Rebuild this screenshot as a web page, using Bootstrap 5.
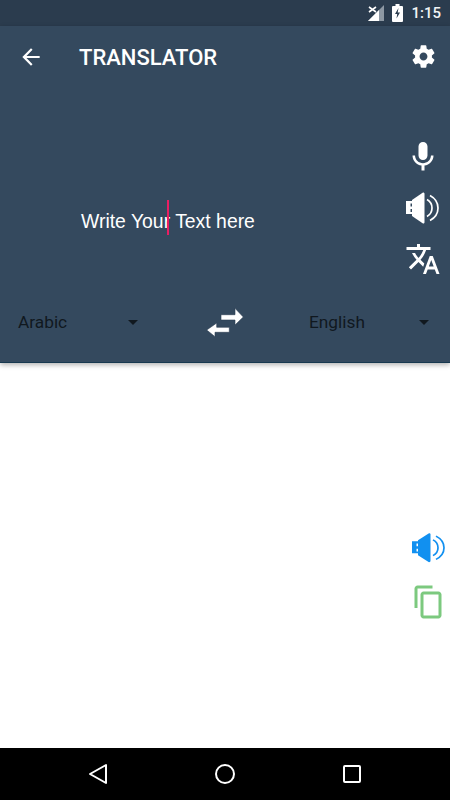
<!doctype html>
<html lang="en">
<head>
    <meta charset="utf-8">
    <meta name="viewport" content="width=device-width, initial-scale=1">
    <title>Translator</title>
    <link href="https://cdn.jsdelivr.net/npm/bootstrap@5.3.3/dist/css/bootstrap.min.css" rel="stylesheet">
    <style>
        html, body { height: 100%; margin: 0; overflow: hidden; }
        body { font-family: Roboto, "Liberation Sans", sans-serif; }
        svg { display: block; flex: none; }

        .app-frame { width: 450px; height: 800px; }

        .status-strip { height: 26px; background: #2b3c4e; color: #f2f4f6; font-size: 15px; font-weight: 500; padding-right: 9px; gap: 8px; }

        .top-panel { height: 337px; background: #34495e; border-bottom: 1px solid #17384f; box-shadow: 0 2px 5px rgba(0, 0, 0, .3); position: relative; }
        .tool-row { height: 62px; padding: 0 13px 0 17.5px; }
        .back-icon { margin-top: -1px; }
        .gear-icon { margin-top: -1px; }
        .app-title { margin: 1px 0 0 35.5px; font-size: 22px; font-weight: 500; color: #fff; line-height: 1; }

        .input-area { height: 207px; padding-right: 9px; }
        .input-text { padding: 118px 0 0 81px; font-family: "Liberation Sans", Arial, sans-serif; font-size: 19.4px; line-height: 30px; color: #fff; white-space: pre; }
        .text-cursor { display: inline-block; width: 2px; height: 35px; margin: -6px 1px 0 -3px; background: #e91e63; vertical-align: top; }
        .side-tools { width: 36px; padding-top: 51px; gap: 15px; }

        .lang-row { height: 67px; padding-bottom: 12px; }
        .lang-pick { font-size: 17.3px; color: #10181f; }
        .lang-left { margin-left: 18px; }
        .lang-right { margin-left: 63px; }
        .swap-icon { margin: -1px 0 0 68.5px; }
        .drop-tri { width: 0; height: 0; border-left: 5px solid transparent; border-right: 5px solid transparent; border-top: 5px solid #10181f; margin-top: -1px; }
        .lang-name-l { width: 109.5px; }
        .lang-name-r { width: 110px; }

        .result-area { height: 385px; padding: 167.5px 3px 0 0; gap: 19.5px; }
        .copy-icon { margin-right: 1.5px; }

        .nav-strip { height: 52px; background: #000; padding: 0 88px; }
    </style>
</head>
<body>
    <div class="app-frame d-flex flex-column bg-white">

        <div class="status-strip d-flex align-items-center justify-content-end">
            <svg width="20" height="20" viewBox="0 0 20 20">
                <path d="M20 2v16H4z" fill="#8d98a3"/>
                <path d="M15 7v11H4z" fill="#fff"/>
                <path d="M5 4l7 5M12 4L5 9" stroke="#fff" stroke-width="1.600"/>
            </svg>
            <svg width="11" height="18" viewBox="0 0 11 18">
                <path d="M3.500 0h4v2H10a1 1 0 0 1 1 1v14a1 1 0 0 1-1 1H1a1 1 0 0 1-1-1V3a1 1 0 0 1 1-1h2.500z" fill="#fff"/>
                <path d="M6.500 4L3 10h2.200l-.7 4.500L8 8.500H5.700z" fill="#2b3c4e"/>
            </svg>
            <span>1:15</span>
        </div>

        <div class="top-panel">
            <div class="tool-row d-flex align-items-center">
                <svg class="back-icon" width="26" height="26" viewBox="0 0 24 24" fill="#fff"><path d="M20 11H7.830l5.590-5.590L12 4l-8 8 8 8 1.410-1.410L7.830 13H20v-2z"/></svg>
                <h1 class="app-title flex-grow-1">TRANSLATOR</h1>
                <svg class="gear-icon" width="27" height="27" viewBox="0 0 24 24" fill="#fff"><path d="M19.430 12.980c.04-.32.07-.64.07-.98s-.03-.66-.07-.98l2.110-1.650c.19-.15.24-.42.12-.64l-2-3.460c-.12-.22-.39-.3-.61-.22l-2.490 1c-.52-.4-1.080-.73-1.690-.98l-.38-2.650C14.460 2.180 14.250 2 14 2h-4c-.25 0-.46.18-.49.42l-.38 2.650c-.61.25-1.170.59-1.690.98l-2.490-1c-.23-.09-.49 0-.61.22l-2 3.460c-.13.22-.07.49.12.64l2.110 1.650c-.04.32-.07.65-.07.98s.03.66.07.98l-2.110 1.650c-.19.15-.24.42-.12.64l2 3.460c.12.22.39.3.61.22l2.490-1c.52.4 1.080.73 1.690.98l.38 2.650c.03.24.24.42.49.42h4c.25 0 .46-.18.49-.42l.38-2.650c.61-.25 1.170-.59 1.690-.98l2.490 1c.23.09.49 0 .61-.22l2-3.460c.12-.22.07-.49-.12-.64l-2.110-1.650zM12 15.500c-1.930 0-3.500-1.570-3.500-3.500s1.570-3.500 3.500-3.500 3.500 1.570 3.500 3.500-1.570 3.500-3.500 3.500z"/></svg>
            </div>

            <div class="input-area d-flex justify-content-between">
                <div class="input-text">Write Your<span class="text-cursor"></span> Text here</div>
                <div class="side-tools d-flex flex-column align-items-center">
                    <svg width="36" height="36" viewBox="0 0 24 24" fill="#fff"><path d="M12 14c1.660 0 2.990-1.340 2.990-3L15 5c0-1.660-1.340-3-3-3S9 3.340 9 5v6c0 1.660 1.340 3 3 3zm5.300-3c0 3-2.540 5.100-5.300 5.100S6.700 14 6.700 11H5c0 3.410 2.720 6.230 6 6.720V21h2v-3.280c3.280-.48 6-3.300 6-6.720h-1.700z"/></svg>
                    <svg width="36" height="36" viewBox="0 0 36 36" fill="#fff">
                        <path d="M1 11h6v2.500H5.500v3H7v2.500H5.500V22H7v2H1z"/>
                        <path d="M7 10l11-7.500c1 0 1.500.5 1.500 1.500v28c0 1-.5 1.500-1.500 1.500L7 26z"/>
                        <path d="M22 9.500c3.500 2 5 5 5 8.500s-1.500 6.500-5 8.500M25 5.500c5.500 3 8 7.500 8 12.500s-2.500 9.500-8 12.500" fill="none" stroke="#fff" stroke-width="1.700"/>
                    </svg>
                    <svg width="36" height="36" viewBox="0 0 24 24" fill="#fff"><path d="M12.870 15.070l-2.540-2.510.03-.03c1.740-1.940 2.980-4.170 3.710-6.530H17V4h-7V2H8v2H1v1.990h11.170C11.500 7.920 10.440 9.750 9 11.350 8.070 10.320 7.300 9.190 6.690 8h-2c.73 1.630 1.730 3.170 2.980 4.560l-5.090 5.020L4 19l5-5 3.110 3.110.76-2.040zM18.500 10h-2L12 22h2l1.120-3h4.750L21 22h2l-4.500-12zm-2.620 7l1.620-4.330L19.120 17h-3.240z"/></svg>
                </div>
            </div>

            <div class="lang-row d-flex align-items-center">
                <div class="lang-pick lang-left d-flex align-items-center">
                    <span class="lang-name-l">Arabic</span><span class="drop-tri"></span>
                </div>
                <svg class="swap-icon" width="40" height="30" viewBox="0 0 40 30" fill="#fff">
                    <path d="M15 7.700h14V1.300L37.300 10 29 18v-5H15z" stroke="#2a3d50" stroke-width=".6"/>
                    <path d="M23.300 25.300H9v4.400L.7 23 10.700 16v4.300h12.600z" stroke="#2a3d50" stroke-width=".6"/>
                </svg>
                <div class="lang-pick lang-right d-flex align-items-center">
                    <span class="lang-name-r">English</span><span class="drop-tri"></span>
                </div>
            </div>
        </div>

        <div class="result-area d-flex flex-column align-items-end">
            <svg width="36" height="33.500" viewBox="0 0 36 36" preserveAspectRatio="none" fill="#1190f0">
                <path d="M1 11h6v2.500H5.500v3H7v2.500H5.500V22H7v2H1z"/>
                <path d="M7 10l11-7.500c1 0 1.500.5 1.500 1.500v28c0 1-.5 1.500-1.500 1.500L7 26z"/>
                <path d="M22 9.500c3.500 2 5 5 5 8.500s-1.500 6.500-5 8.500M25 5.500c5.500 3 8 7.500 8 12.500s-2.500 9.500-8 12.500" fill="none" stroke="#1190f0" stroke-width="1.700"/>
            </svg>
            <svg class="copy-icon" width="36" height="36" viewBox="0 0 24 24" fill="#7cc97f"><path d="M15 1H5C4 1 3 2 3 3v13h2V3h10V1zm4 4H9C8 5 7 6 7 7v14c0 1 1 2 2 2h10c1 0 2-1 2-2V7c0-1-1-2-2-2zm0 16H9V7h10v14z"/></svg>
        </div>

        <div class="nav-strip d-flex align-items-center justify-content-between">
            <svg width="20" height="22" viewBox="0 0 20 22"><path d="M18 2v18L2 11z" fill="none" stroke="#fff" stroke-width="2" stroke-linejoin="round"/></svg>
            <svg width="22" height="22" viewBox="0 0 22 22"><circle cx="11" cy="11" r="9" fill="none" stroke="#fff" stroke-width="2"/></svg>
            <svg width="20" height="20" viewBox="0 0 20 20"><rect x="2" y="2" width="16" height="16" rx="1" fill="none" stroke="#fff" stroke-width="2"/></svg>
        </div>
    </div>

    <script src="https://cdn.jsdelivr.net/npm/bootstrap@5.3.3/dist/js/bootstrap.bundle.min.js"></script>
</body>
</html>
